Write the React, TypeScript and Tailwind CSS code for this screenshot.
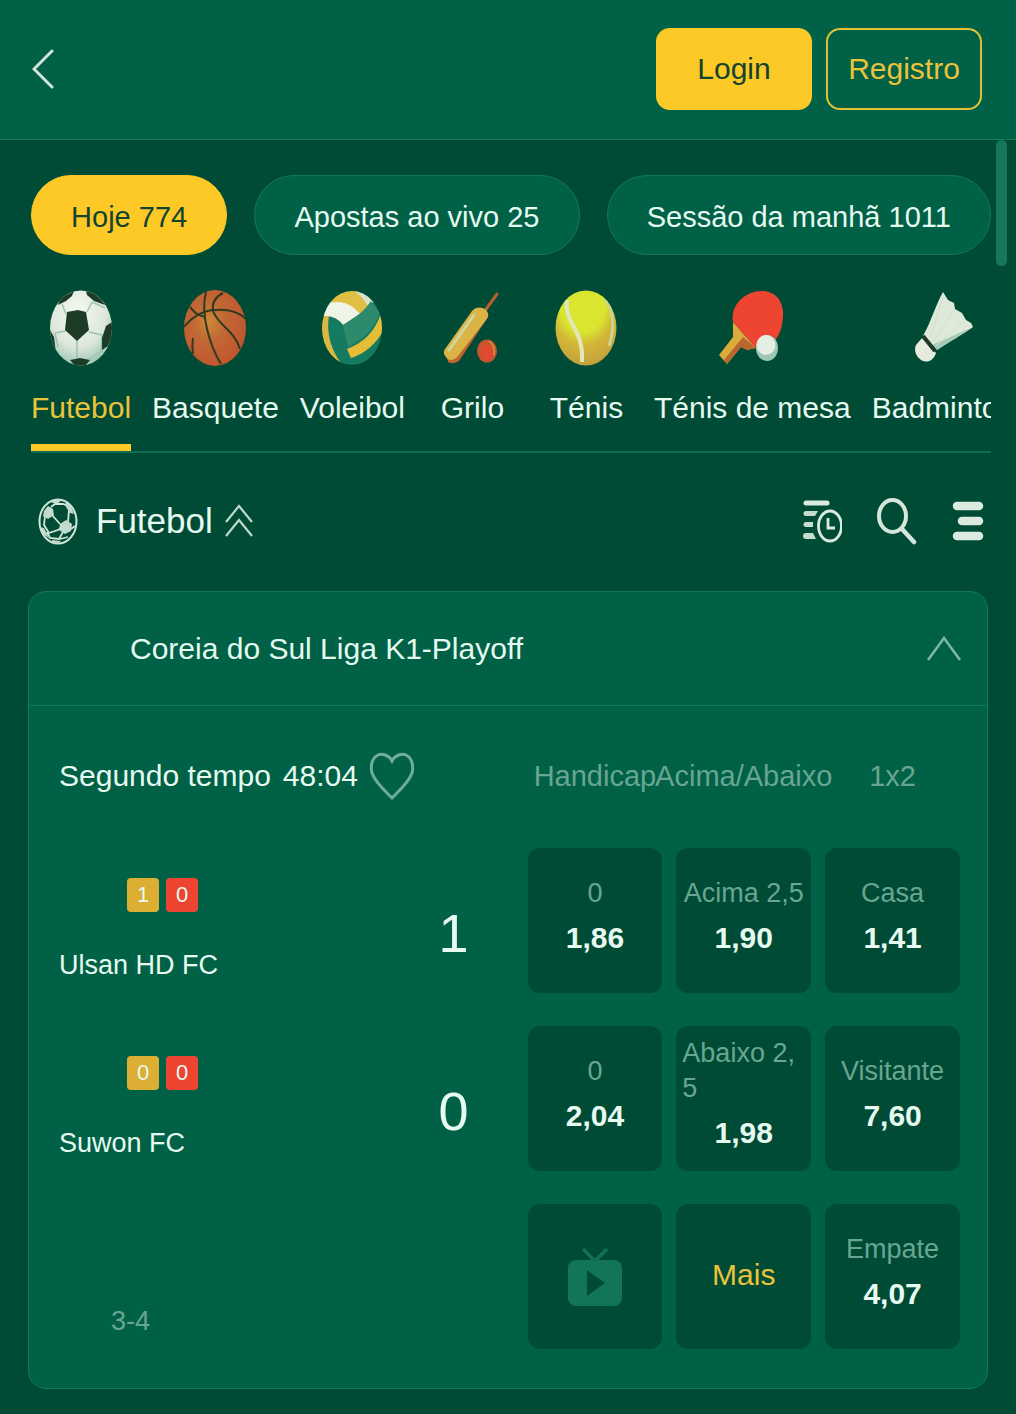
import { useState } from 'react';
import type { ReactNode } from 'react';

type IconProps = { className?: string };

type Sport = {
  label: string;
  icon: (props: IconProps) => ReactNode;
};

type Odd = {
  label: string;
  value: string;
};

type Team = {
  name: string;
  yellow: number;
  red: number;
  score: number;
  odds: Odd[];
};

function SoccerBall({ className }: IconProps) {
  return (
    <svg viewBox="0 0 62 76" className={className} aria-hidden="true">
      <defs>
        <radialGradient id="soccer-body" cx="0.45" cy="0.3" r="0.75">
          <stop offset="0" stopColor="#f4faf3" />
          <stop offset="0.6" stopColor="#dde7da" />
          <stop offset="1" stopColor="#8fc0ae" />
        </radialGradient>
        <clipPath id="soccer-clip">
          <ellipse cx="31" cy="38" rx="31" ry="37.5" />
        </clipPath>
      </defs>
      <g clipPath="url(#soccer-clip)">
        <rect width="62" height="76" fill="url(#soccer-body)" />
        <g stroke="#9cc4b3" strokeWidth="1.5" fill="none">
          <path d="M16 24 12 14M37 22l5-10M39 42l13 3M27 50v22M16 41 5 43M42 12 55 18M5 43l3 14M52 45l-1 16-12 8" />
        </g>
        <g fill="#1d3b25">
          <path d="M17 22 28 20l8 2 3 18-12 11-12-11Z" />
          <path d="M36 1c8 1 15 7 19 14l-11-4-7-6Z" />
          <path d="M24 1 10 8 8 15l8-4 6-5Z" />
          <path d="M62 32l-6 4-4 12v12l6-4 6-14Z" />
          <path d="M0 40l4 7 2 16-5-5-3-12Z" />
          <path d="M20 70l10-2 10 2-5 6H25Z" />
        </g>
      </g>
    </svg>
  );
}

function Basketball({ className }: IconProps) {
  return (
    <svg viewBox="0 0 62 76" className={className} aria-hidden="true">
      <defs>
        <radialGradient id="basket-body" cx="0.4" cy="0.42" r="0.6">
          <stop offset="0" stopColor="#cf8936" />
          <stop offset="0.4" stopColor="#c06a35" />
          <stop offset="1" stopColor="#c2562f" />
        </radialGradient>
        <clipPath id="basket-clip">
          <ellipse cx="31" cy="38" rx="31" ry="38" />
        </clipPath>
      </defs>
      <g clipPath="url(#basket-clip)">
        <rect width="62" height="76" fill="url(#basket-body)" />
        <g stroke="#2f3a20" strokeWidth="2" fill="none">
          <path d="M0 37c8-10 18-16 30-17 12-1 24 1 32 9" />
          <path d="M39 3C31 7 28 14 29 21c5 14 22 20 27 38" />
          <path d="M22 2c-6 22 4 54 15 72" />
          <path d="M6 17c5 6 7 8 15 10M9 48c-1 6-1 10 0 16" />
        </g>
      </g>
    </svg>
  );
}

function Volleyball({ className }: IconProps) {
  return (
    <svg viewBox="0 0 62 76" className={className} aria-hidden="true">
      <defs>
        <clipPath id="volley-clip">
          <ellipse cx="31" cy="38" rx="30" ry="37" />
        </clipPath>
      </defs>
      <g clipPath="url(#volley-clip)">
        <rect width="62" height="76" fill="#147a60" />
        <path d="M5 14C16 8 32 12 40 23L22 35C16 27 8 25 0 27Z" fill="#eef4e6" />
        <path d="M8 13C17-2 32-2 36 1c6 5 9 10 12 15l-9 8C30 13 20 10 8 13Z" fill="#dfc045" />
        <path d="M32 0h14l8 11-7 5C43 9 38 4 32 0Z" fill="#d9e3cd" />
        <path d="M22 35C34 29 44 20 50 11l9 12C52 40 42 50 27 57Z" fill="#2e8a6c" />
        <path d="M60 23c4 10 3 16 1 20C52 58 38 66 30 68l-4-9c16-6 28-17 34-36Z" fill="#e5bd37" />
        <path d="M3 26h5c-3 16 2 34 12 47C2 64-4 44 3 26Z" fill="#dcb840" />
      </g>
    </svg>
  );
}

function CricketBat({ className }: IconProps) {
  return (
    <svg viewBox="0 0 62 76" className={className} aria-hidden="true">
      <path d="M43 22 56 4" stroke="#b5622f" strokeWidth="3" strokeLinecap="round" />
      <path d="M7 72c5 3 11 0 13-4l27-41-3-7-38 46Z" fill="#bd6430" />
      <path d="M4 59 31 21c4-5 11-4 14-1 3 4 3 6 0 10L17 66c-4 5-10 5-12 1-2-2-3-5-1-8Z" fill="#dcb345" />
      <path d="M8 60 33 25" stroke="#cdd7a0" strokeWidth="3" strokeLinecap="round" />
      <ellipse cx="46" cy="61" rx="10" ry="11.5" fill="#c4552f" />
      <ellipse cx="46" cy="62" rx="6" ry="8" fill="#e04a31" />
      <path d="M48 51c4 3 6 8 5 14" stroke="#d99a3a" strokeWidth="1.5" fill="none" />
    </svg>
  );
}

function TennisBall({ className }: IconProps) {
  return (
    <svg viewBox="0 0 62 76" className={className} aria-hidden="true">
      <defs>
        <radialGradient id="tennis-body" cx="0.45" cy="0.2" r="0.85">
          <stop offset="0.42" stopColor="#d9e52f" />
          <stop offset="0.62" stopColor="#d3b638" />
          <stop offset="1" stopColor="#bf9c3c" />
        </radialGradient>
        <clipPath id="tennis-clip">
          <ellipse cx="31" cy="38" rx="30.5" ry="37.5" />
        </clipPath>
      </defs>
      <g clipPath="url(#tennis-clip)">
        <rect width="62" height="76" fill="url(#tennis-body)" />
        <path d="M12 10c-3 24 17 28 15 62" stroke="#e1e6bd" strokeWidth="4" fill="none" />
        <path d="M50 9c9 14 10 28 4 47" stroke="#cbd58f" strokeWidth="3" fill="none" />
      </g>
    </svg>
  );
}

function TableTennis({ className }: IconProps) {
  return (
    <svg viewBox="0 0 66 76" className={className} aria-hidden="true">
      <path d="M14 32 37 58 28 60 22 57 8 74 0 65 14 47Z" fill="#dcab3b" />
      <path d="M24 47 37 58 28 60 22 57 8 74 5 70Z" fill="#b9672f" />
      <path d="M14 32C11 15 26 1 43 1c14 0 22 11 21 26-1 14-6 25-17 31H37Z" fill="#ee4432" />
      <ellipse cx="48" cy="58" rx="11" ry="13" fill="#9cc8b5" />
      <ellipse cx="47" cy="55" rx="9.5" ry="10" fill="#e4efe2" />
    </svg>
  );
}

function Shuttlecock({ className }: IconProps) {
  return (
    <svg viewBox="0 0 62 76" className={className} aria-hidden="true">
      <path d="M31 2l5 8 6 3 1 6 7 4 4 7 5 3 2 4C51 44 37 52 25 60L11 46C19 32 24 14 31 2Z" fill="#dfe9da" />
      <path d="M61 37C51 44 37 52 25 60l-5-5Z" fill="#a5cbb8" />
      <path d="M31 8 18 48M42 20 21 52M52 31 24 56" stroke="#cfdfd0" strokeWidth="1" />
      <path d="M10 48l14 15c-3 9-10 10-15 7-6-4-7-11-5-15Z" fill="#e6ecdd" />
      <path d="m11 46 12 15" stroke="#1d3b25" strokeWidth="4" />
    </svg>
  );
}

function BallOutline({ className }: IconProps) {
  return (
    <svg viewBox="0 0 40 47" className={className} fill="none" stroke="#d2e6d9" aria-hidden="true">
      <ellipse cx="20" cy="23.5" rx="18.5" ry="22" strokeWidth="2" />
      <path
        d="M14 17l8 9M13 9l4-3h8l5 2M31 12l-1 12M7 18l-1 9 5 8 9-3 3-2M33 31l4-3M25 34l-4 7-9-1-3-6M22 41l8-2"
        strokeWidth="1.8"
      />
      <g fill="#c3dbcd" stroke="none">
        <path d="m6 13 4-5 5 3 1 6-6 4-5-3Z" />
        <path d="m27 3 6 5 3 8-4-1-4-6Z" />
        <path d="m22 26 6-4 6 4-1 7-6 3-6-4Z" />
        <path d="m2 29 4 1 5 10-6-4Z" />
        <path d="m14 42 9 1-3 3-6-1Z" />
        <path d="m12 4 6-3 6 1-5 4Z" />
      </g>
    </svg>
  );
}

function DoubleChevron({ className }: IconProps) {
  return (
    <svg viewBox="0 0 28 34" className={className} fill="none" stroke="#bfd8ca" strokeWidth="2.2" aria-hidden="true">
      <path d="M1 18 14 2l13 16M1 32l13-16 13 16" />
    </svg>
  );
}

function ListClock({ className }: IconProps) {
  return (
    <svg viewBox="0 0 40 43" className={className} fill="none" stroke="#dcebdf" aria-hidden="true">
      <path d="M4 3h21" strokeWidth="5" strokeLinecap="round" />
      <g fill="#c6dccf" stroke="none">
        <path d="M4 11h12l-3 5H4a2.500 2.500 0 0 1 0-5Z" />
        <path d="M4 22h7v5H4a2.500 2.500 0 0 1 0-5Z" />
        <path d="M4 33h7l3 6H4a3 3 0 0 1 0-6Z" />
      </g>
      <ellipse cx="28" cy="26" rx="11.5" ry="15" strokeWidth="2.8" />
      <path d="M26 18v10h7" strokeWidth="2.8" />
    </svg>
  );
}

function Magnifier({ className }: IconProps) {
  return (
    <svg viewBox="0 0 40 47" className={className} fill="none" stroke="#d5e7da" aria-hidden="true">
      <ellipse cx="15.5" cy="18" rx="13.5" ry="16" strokeWidth="4" />
      <path d="m25 31 12 13" strokeWidth="4.5" strokeLinecap="round" />
    </svg>
  );
}

function MenuBars({ className }: IconProps) {
  return (
    <svg viewBox="0 0 32 40" className={className} stroke="#dcebdf" strokeWidth="8.5" strokeLinecap="round" aria-hidden="true">
      <path d="M5 5h22M10 20h17M5 35h22" />
    </svg>
  );
}

function Heart({ className }: IconProps) {
  return (
    <svg viewBox="0 0 44 48" className={className} fill="none" stroke="#6fae98" strokeWidth="3" aria-hidden="true">
      <path d="M22 9C19 3 12 1 8 3 2 6 0 14 2 21c3 9 12 17 20 25 8-8 17-16 20-25 2-7 0-15-6-18-4-2-11 0-14 6Z" />
    </svg>
  );
}

function TvPlay({ className }: IconProps) {
  return (
    <svg viewBox="0 0 54 60" className={className} aria-hidden="true">
      <path d="m15 2 12 12L39 2" stroke="#12705a" strokeWidth="3.5" fill="none" />
      <rect y="13" width="54" height="46" rx="8" fill="#12755a" />
      <path d="m19 23 18 13-18 13Z" fill="#004b36" />
    </svg>
  );
}

const filters = ['Hoje 774', 'Apostas ao vivo 25', 'Sessão da manhã 1011'];

const sports: Sport[] = [
  { label: 'Futebol', icon: SoccerBall },
  { label: 'Basquete', icon: Basketball },
  { label: 'Voleibol', icon: Volleyball },
  { label: 'Grilo', icon: CricketBat },
  { label: 'Ténis', icon: TennisBall },
  { label: 'Ténis de mesa', icon: TableTennis },
  { label: 'Badminton', icon: Shuttlecock },
];

const teams: Team[] = [
  {
    name: 'Ulsan HD FC',
    yellow: 1,
    red: 0,
    score: 1,
    odds: [
      { label: '0', value: '1,86' },
      { label: 'Acima 2,5', value: '1,90' },
      { label: 'Casa', value: '1,41' },
    ],
  },
  {
    name: 'Suwon FC',
    yellow: 0,
    red: 0,
    score: 0,
    odds: [
      { label: '0', value: '2,04' },
      { label: 'Abaixo 2,5', value: '1,98' },
      { label: 'Visitante', value: '7,60' },
    ],
  },
];

function OddCell({ label, value }: Odd) {
  return (
    <button className="flex min-h-[145px] flex-col items-center justify-center rounded-xl bg-[#004b36] px-1.5 pb-0.5">
      <span className="text-left text-[27px] leading-[35px] break-all text-[#68a691]">{label}</span>
      <span className="text-[30px] leading-[53px] font-bold">{value}</span>
    </button>
  );
}

function TeamRow({ team }: { team: Team }) {
  return (
    <div className="flex">
      <div className="flex flex-1 justify-between pr-14">
        <div className="pt-[30px]">
          <div className="flex gap-[7px] pl-[68px] text-[22px] leading-[34px]">
            <span className="w-8 rounded-sm bg-[#dcae34] text-center">{team.yellow}</span>
            <span className="w-8 rounded-sm bg-[#ee4432] text-center">{team.red}</span>
          </div>
          <p className="mt-[35px] text-[27px] leading-9">{team.name}</p>
        </div>
        <div className="flex w-9 items-center justify-center pt-6 text-[54px]">{team.score}</div>
      </div>
      <div className="grid w-[48%] grid-cols-3 gap-3.5">
        {team.odds.map((odd) => (
          <OddCell key={odd.value} label={odd.label} value={odd.value} />
        ))}
      </div>
    </div>
  );
}

export default function App() {
  const [filter, setFilter] = useState(filters[0]);
  const [sport, setSport] = useState(sports[0].label);
  const [open, setOpen] = useState(true);

  return (
    <div className="min-h-screen bg-[#004b36] pb-6 font-['Liberation_Sans',Arial,sans-serif] text-[30px] leading-10 text-[#e6faf0]">
      <header className="flex h-[140px] items-center justify-between border-b border-[#15785b] bg-[#006147] pr-[34px] pb-0.5 pl-8">
        <button aria-label="Voltar">
          <svg viewBox="0 0 22 40" className="h-10 w-[22px]" fill="none" stroke="#cfe6da" strokeWidth="3" strokeLinecap="round" aria-hidden="true">
            <path d="M20 2 2 20l18 18" />
          </svg>
        </button>
        <div className="flex gap-3.5">
          <button className="h-[82px] w-[156px] rounded-[14px] bg-[#fdc926] text-[#12432f]">Login</button>
          <button className="h-[82px] w-[156px] rounded-[14px] border-2 border-[#e3bf33] text-[#eac33a]">Registro</button>
        </div>
      </header>

      <div className="relative">
        {/* scroll thumb */}
        <div className="absolute top-0 right-[9px] h-[126px] w-[11px] rounded-full bg-[#15785b]" />

        <div className="pr-[25px] pl-[31px]">
          <div className="flex gap-[27px] overflow-hidden pt-[35px]">
            {filters.map((item) => (
              <button
                key={item}
                onClick={() => setFilter(item)}
                className={`h-20 shrink-0 grow rounded-full border px-[37px] pt-1 text-[29px] whitespace-nowrap ${
                  item === filter
                    ? 'border-[#fdc926] bg-[#fdc926] text-[#12432f]'
                    : 'border-[#15785b] bg-[#006147]'
                }`}
              >
                {item}
              </button>
            ))}
          </div>

          <nav className="flex gap-[21px] overflow-hidden border-b-2 border-[#0f6c50] pt-[35px]">
            {sports.map(({ label, icon: Icon }) => (
              <button
                key={label}
                onClick={() => setSport(label)}
                className={`flex min-w-[93px] shrink-0 flex-col items-center border-b-[7px] whitespace-nowrap ${
                  label === sport ? 'border-[#fdc926] text-[#eac33a]' : 'border-transparent'
                }`}
              >
                <Icon className="h-[76px] w-auto" />
                <span className="mt-[22px] mb-4">{label}</span>
              </button>
            ))}
          </nav>
        </div>
      </div>

      <main className="px-7">
        <div className="flex h-[138px] items-center justify-between pr-1 pb-0.5 pl-2.5">
          <h1 className="flex items-center text-[35px]">
            <BallOutline className="mr-[18px] h-[47px] w-10" />
            Futebol
            <DoubleChevron className="ml-3 h-[34px] w-7" />
          </h1>
          <div className="flex items-center gap-[35px]">
            <button aria-label="Histórico">
              <ListClock className="h-[43px] w-10" />
            </button>
            <button aria-label="Pesquisar">
              <Magnifier className="h-[47px] w-10" />
            </button>
            <button aria-label="Menu">
              <MenuBars className="h-10 w-8" />
            </button>
          </div>
        </div>

        <section className="rounded-[18px] border border-[#15785b] bg-[#006147]">
          <button
            onClick={() => setOpen(!open)}
            aria-expanded={open}
            className="flex h-[114px] w-full items-center justify-between border-b border-[#15785b] pr-[26px] pl-[101px]"
          >
            <span>Coreia do Sul Liga K1-Playoff</span>
            <svg viewBox="0 0 34 26" className="h-[26px] w-[34px]" fill="none" stroke="#7fb7a3" strokeWidth="2.5" aria-hidden="true">
              <path d="M1 24 17 2l16 22" />
            </svg>
          </button>

          {open && (
            <div className="flex flex-col gap-[33px] pr-[27px] pb-[39px] pl-[30px]">
              <div className="mt-[46px] mb-[15px] flex h-12 items-center">
                <div className="flex flex-1 items-center gap-3">
                  <span>Segundo tempo</span>
                  <span>48:04</span>
                  <button aria-label="Favorito">
                    <Heart className="h-12 w-11" />
                  </button>
                </div>
                <div className="grid w-[48%] grid-cols-3 gap-3.5 text-[29px] text-[#68a691]">
                  <span className="flex justify-center">Handicap</span>
                  <span className="flex justify-center">Acima/Abaixo</span>
                  <span className="flex justify-center">1x2</span>
                </div>
              </div>

              {teams.map((team) => (
                <TeamRow key={team.name} team={team} />
              ))}

              <div className="flex">
                <div className="flex flex-1 items-end pb-2 pl-[52px] text-[27px] text-[#68a691]">3-4</div>
                <div className="grid w-[48%] grid-cols-3 gap-3.5">
                  <button aria-label="Assistir" className="flex min-h-[145px] items-center justify-center rounded-xl bg-[#004b36]">
                    <TvPlay className="h-[60px] w-[54px]" />
                  </button>
                  <button className="rounded-xl bg-[#004b36] pb-1 text-[#eac33a]">Mais</button>
                  <OddCell label="Empate" value="4,07" />
                </div>
              </div>
            </div>
          )}
        </section>
      </main>
    </div>
  );
}
